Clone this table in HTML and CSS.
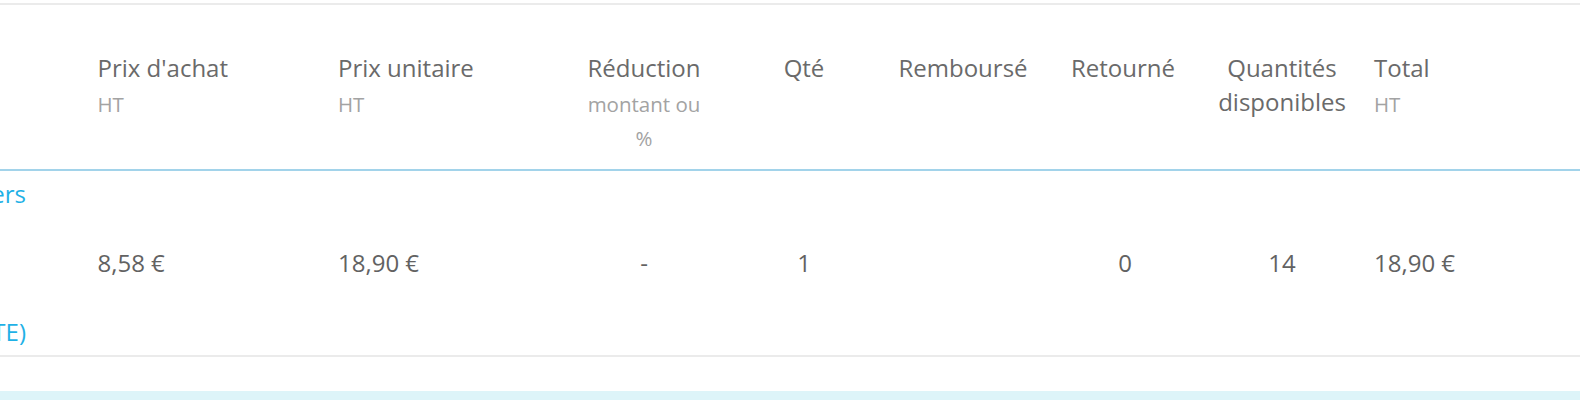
FILE: index.html
```html
<!DOCTYPE html>
<html lang="fr">
<head>
<meta charset="utf-8">
<title>Produits</title>
<link rel="stylesheet" href="styles.css">
</head>
<body>
<div class="page">
  <div class="products">
    <div class="grid head">
      <div class="cell"></div>
      <div class="cell left"><div class="title">Prix d'achat</div><div class="sub">HT</div></div>
      <div class="cell left"><div class="title">Prix unitaire</div><div class="sub">HT</div></div>
      <div class="cell center"><div class="title">Réduction</div><div class="sub">montant ou</div><div class="sub tight">%</div></div>
      <div class="cell center"><div class="title">Qté</div></div>
      <div class="cell center"><div class="title">Remboursé</div></div>
      <div class="cell center"><div class="title">Retourné</div></div>
      <div class="cell center"><div class="title">Quantités</div><div class="title">disponibles</div></div>
      <div class="cell left last"><div class="title">Total</div><div class="sub">HT</div></div>
    </div>
    <div class="grid row">
      <div class="cell name">
        <div class="clip"><a class="link" href="#">ers</a></div>
        <div class="clip"><a class="link" href="#">TE)</a></div>
      </div>
      <div class="cell left value">8,58 €</div>
      <div class="cell left value">18,90 €</div>
      <div class="cell center value">-</div>
      <div class="cell center value">1</div>
      <div class="cell center value"></div>
      <div class="cell center value returned">0</div>
      <div class="cell center value">14</div>
      <div class="cell left value last">18,90 €</div>
    </div>
  </div>
  <div class="info-band"></div>
</div>
</body>
</html>
```
FILE: styles.css
```css
html, body {
  margin: 0;
  padding: 0;
  background: #ffffff;
}
body {
  font-family: "Open Sans", "DejaVu Sans", sans-serif;
  color: #666666;
  width: 1580px;
  height: 400px;
  overflow: hidden;
}
.page {
  padding-top: 3px;
}
.products {
  border-top: 2px solid #ebebeb;
}
.grid {
  display: grid;
  grid-template-columns: 97.5px 240.5px 242px 128px 192px 126px 194px 124px 236px;
}
.head {
  height: 164px;
  border-bottom: 2px solid #a2d3ea;
  align-items: start;
}
.head .cell {
  padding-top: 46px;
}
.title {
  font-size: 24px;
  line-height: 34px;
  color: #6a6a6a;
  white-space: nowrap;
}
.sub {
  font-size: 20.5px;
  line-height: 34px;
  color: #a3a3a3;
  white-space: nowrap;
  position: relative;
  top: 1.5px;
}
.left {
  text-align: left;
}
.center {
  display: flex;
  flex-direction: column;
  align-items: center;
  text-align: center;
}
.last {
  padding-left: 30px;
}
.row {
  height: 184px;
  border-bottom: 2px solid #ebebeb;
  align-items: center;
}
.value {
  font-size: 24px;
  line-height: 34px;
  color: #626262;
}
.returned {
  padding-left: 4px;
}
.name {
  height: 100%;
  box-sizing: border-box;
  padding: 6px 0 6px;
  display: flex;
  flex-direction: column;
  justify-content: space-between;
}
.clip {
  width: 26px;
  overflow: hidden;
  display: flex;
  justify-content: flex-end;
}
.link {
  font-size: 24px;
  line-height: 34px;
  color: #1fb1e6;
  text-decoration: none;
  white-space: nowrap;
  flex: none;
}
.info-band {
  margin-top: 34px;
  height: 10px;
  background: #ddf4f9;
}
```
